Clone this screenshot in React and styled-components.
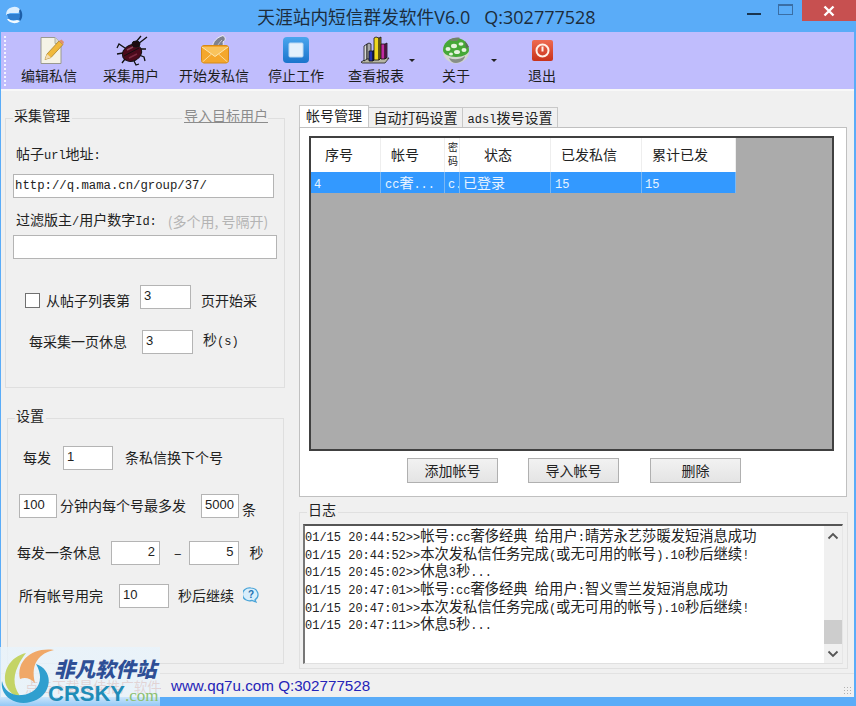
import styled, { createGlobalStyle } from "styled-components";

const CJK = `"Noto Sans CJK SC", "Noto Sans", sans-serif`;
const MONO = `"Liberation Mono", "Noto Sans CJK SC", monospace`;

const GlobalStyle = createGlobalStyle`
  html, body {
    margin: 0;
    padding: 0;
    overflow: hidden;
    background: #5aacf8;
  }
  * { box-sizing: border-box; }
`;

// latin runs are a half-width slab face in the original, cjk runs a bigger one
function Mixed({ children }) {
  const runs = children.match(/[\x00-\x7f]+|[^\x00-\x7f]+/g) || [];
  return runs.map((run, i) =>
    /^[\x00-\x7f]/.test(run) ? <Latin key={i}>{run}</Latin> : <span key={i}>{run}</span>
  );
}

function PencilIcon() {
  return (
    <svg width="32" height="30" viewBox="0 0 32 30">
      <path d="M8 2.500h14l6 6V28.500H8z" fill="#f5f3e6" stroke="#9a9a90" />
      <path d="M22 2.500v6h6" fill="#dcdccc" stroke="#b0b0a0" />
      <path d="M14 19l12-13 4 3.500-12 13-6 2z" fill="#f0b93c" stroke="#a8802a" strokeWidth=".8" />
      <path d="M26 6l4 3.500 1-2.500-2.500-2.500z" fill="#e09070" />
      <path d="M14 19l4 3.500-6 2z" fill="#f4dcae" />
    </svg>
  );
}

function BugIcon() {
  return (
    <svg width="32" height="30" viewBox="0 0 32 30" style={{ overflow: "visible" }}>
      <g stroke="#111" strokeWidth="1.300" fill="none">
        <path d="M21 7l5-6M23 9l9-7" />
        <path d="M10 13L4 9 2 13M8 18l-6 1M10 24l-3 4M19 26l2 4 3-1M24 20l5 2 1 4M25 14l6 0" />
      </g>
      <ellipse cx="17" cy="18" rx="10" ry="8" transform="rotate(-25 17 18)" fill="#4b0a1c" stroke="#111" />
      <ellipse cx="21" cy="9" rx="4" ry="3" fill="#1d0a10" stroke="#111" />
      <path d="M9 21L24 13" stroke="#111" />
      <path d="M12 15l6-3" stroke="#8a4658" strokeWidth="1.500" />
      <path d="M14 23l8-4" stroke="#7a2a40" strokeWidth="1.500" />
    </svg>
  );
}

function MailIcon() {
  return (
    <svg width="32" height="30" viewBox="0 0 32 30">
      <path d="M15 16C13 9 17 3 25 0.500c3 2 3 5 0 6.500 1 3-1 7-5 9.500z" fill="#7f828e" stroke="#f0f0f6" strokeWidth="1" />
      <path d="M18 15c1-4 3-7 6-10" stroke="#c4c6d0" fill="none" />
      <rect x="3.500" y="10.500" width="27" height="17.500" rx="2.500" fill="#f4a72c" stroke="#d58a18" />
      <path d="M4 12l13 9.500L30 12" fill="#f9c35c" stroke="#fbe6b0" />
      <path d="M4.500 27l9-8M29.500 27l-9-8" stroke="#fbdc98" />
    </svg>
  );
}

function StopIcon() {
  return (
    <svg width="32" height="30" viewBox="0 0 32 30">
      <defs>
        <linearGradient id="stopFill" x1="0" y1="0" x2="0" y2="1">
          <stop offset="0" stopColor="#4aa6ee" />
          <stop offset="1" stopColor="#1a74cc" />
        </linearGradient>
      </defs>
      <rect x="3" y="2" width="26" height="26" rx="4" fill="url(#stopFill)" />
      <rect x="9" y="8" width="14" height="14" rx="1" fill="#e4f1fc" stroke="#b8d8f4" />
    </svg>
  );
}

function ChartIcon() {
  return (
    <svg width="32" height="30" viewBox="0 0 32 30">
      <path d="M1 27l7-4h21l-4 5H2z" fill="#b6b6a4" stroke="#222" strokeWidth=".8" />
      <g stroke="#111" strokeWidth=".8">
        <path d="M4 11l3-2v15l-3 2z" fill="#d8d8d8" />
        <path d="M7 9l2-1 2 1v15H7z" fill="#a9a9a9" />
        <path d="M9 16h4v10H9z" fill="#2533b0" />
        <path d="M13 16l2-1v9l-2 2z" fill="#121a66" />
        <path d="M14 3l2-1 3 1v22h-5z" fill="#f0d820" />
        <path d="M19 3l2-1v21l-2 2z" fill="#99860c" />
        <path d="M21 9h4v15h-4z" fill="#c02aa0" />
        <path d="M25 9l2-1v14l-2 2z" fill="#701460" />
      </g>
    </svg>
  );
}

function GlobeIcon() {
  return (
    <svg width="32" height="30" viewBox="0 0 32 30">
      <ellipse cx="16" cy="16" rx="13" ry="12.500" fill="#d2d6d0" />
      <path d="M3 15C3 8 9 3 16 3s13 5 13 12c0 4-6 7-13 7S3 19 3 15z" fill="#46a838" />
      <g fill="#e6f4de">
        <ellipse cx="8" cy="14" rx="2.500" ry="2" />
        <ellipse cx="14" cy="11" rx="3" ry="2.200" />
        <ellipse cx="21" cy="9" rx="2.500" ry="1.800" />
        <ellipse cx="24" cy="15" rx="2.500" ry="2" />
        <ellipse cx="17" cy="17" rx="3" ry="2" />
        <ellipse cx="11" cy="19" rx="2" ry="1.500" />
      </g>
      <path d="M9 5c3-2 8-3 11-2l-3 3-5 0z" fill="#728368" />
      <path d="M9 23c5 2 11 2 16-2 0 3-4 7-9 7-3 0-6-2-7-5z" fill="#878f86" />
      <path d="M25 6l4 6-3 1z" fill="#5d6b5a" />
    </svg>
  );
}

function PowerIcon() {
  return (
    <svg width="32" height="30" viewBox="0 0 32 30">
      <defs>
        <linearGradient id="powerFill" x1="0" y1="0" x2="0" y2="1">
          <stop offset="0" stopColor="#ee6a50" />
          <stop offset="1" stopColor="#c8321a" />
        </linearGradient>
      </defs>
      <rect x="6" y="5" width="21" height="21" rx="2" fill="url(#powerFill)" />
      <circle cx="16.500" cy="15.500" r="6" fill="none" stroke="#fff1e8" strokeWidth="2" />
      <path d="M16.500 11.500v5" stroke="#fff1e8" strokeWidth="2" />
    </svg>
  );
}

function AppIcon() {
  return (
    <svg width="20" height="22" viewBox="0 0 20 22">
      <path d="M2 11a8 8 0 0 1 15-4l-3 2H6z" fill="#dcefff" />
      <path d="M3 10h13l-1 6H5z" fill="#2f7fd0" />
      <path d="M3 15c2 4 9 6 13 2l-3-1c-3 1-6 1-8-1z" fill="#f4fbff" />
      <path d="M16 5c3 3 3 9 0 12l-1-2c1-3 1-6 0-8z" fill="#1c5ea8" />
    </svg>
  );
}

function HelpIcon() {
  return (
    <svg width="16" height="16" viewBox="0 0 16 16">
      <path d="M8 1a7 6.500 0 0 1 4 11.800L13 15l-4-1.600A7 6.500 0 1 1 8 1z" fill="#d8eefb" stroke="#4aa4d8" strokeWidth="1.200" />
      <text x="8" y="11" textAnchor="middle" fontSize="10" fontWeight="700" fontFamily="Liberation Sans" fill="#2270b0">?</text>
    </svg>
  );
}

const tools = [
  { label: "编辑私信", w: 80, icon: <PencilIcon /> },
  { label: "采集用户", w: 84, icon: <BugIcon /> },
  { label: "开始发私信", w: 82, icon: <MailIcon /> },
  { label: "停止工作", w: 82, icon: <StopIcon /> },
  { label: "查看报表", w: 78, icon: <ChartIcon />, menu: true },
  { label: "关于", w: 82, icon: <GlobeIcon />, menu: true },
  { label: "退出", w: 90, icon: <PowerIcon /> },
];

const columns = [
  { title: "序号", w: 70, head: 14, cell: 3, value: "4" },
  { title: "帐号", w: 64, head: 10, cell: 4, value: "cc奢..." },
  { title: "密码", w: 15, head: 3, cell: 3, value: "c.", squeezed: true },
  { title: "状态", w: 91, head: 24, cell: 3, value: "已登录" },
  { title: "已发私信", w: 91, head: 10, cell: 4, value: "15" },
  { title: "累计已发", w: 94, head: 10, cell: 3, value: "15" },
];

const logLines = [
  "01/15 20:44:52>>帐号:cc奢侈经典 给用户:晴芳永艺莎暖发短消息成功",
  "01/15 20:44:52>>本次发私信任务完成(或无可用的帐号).10秒后继续!",
  "01/15 20:45:02>>休息3秒...",
  "01/15 20:47:01>>帐号:cc奢侈经典 给用户:智义雪兰发短消息成功",
  "01/15 20:47:01>>本次发私信任务完成(或无可用的帐号).10秒后继续!",
  "01/15 20:47:11>>休息5秒...",
];

export default function App() {
  return (
    <>
      <GlobalStyle />
      <Win>
        <TitleBar>
          <AppIconSlot>
            <AppIcon />
          </AppIconSlot>
          <TitleText>
            天涯站内短信群发软件<TitleLatin>V6.0&nbsp;&nbsp;&nbsp;Q:302777528</TitleLatin>
          </TitleText>
          <WinControls>
            <MinButton />
            <MaxButton />
            <CloseButton>
              <svg width="12" height="12" viewBox="0 0 12 12">
                <path d="M1.500 1.500l9 9M10.500 1.500l-9 9" stroke="#fff" strokeWidth="2.400" />
              </svg>
            </CloseButton>
          </WinControls>
        </TitleBar>

        <Body>
          <Toolbar>
            <Grip />
            {tools.map((tool) => (
              <ToolButton key={tool.label} $w={tool.w}>
                <ToolIcon>{tool.icon}</ToolIcon>
                <ToolLabel>{tool.label}</ToolLabel>
                {tool.menu && <MenuCaret />}
              </ToolButton>
            ))}
          </Toolbar>

          <Content>
            <LeftColumn>
              <Group $w={280} $h={270} $left={4} $top={29}>
                <GroupTitle $left={7}>采集管理</GroupTitle>
                <GroupLink>导入目标用户</GroupLink>
                <Row $h={20} $top={27} $left={10}>
                  <Text><Mixed>帖子url地址:</Mixed></Text>
                </Row>
                <Row $top={8} $left={7}>
                  <UrlInput $w={261} readOnly value="http://q.mama.cn/group/37/" />
                </Row>
                <Row $h={20} $top={14} $left={10}>
                  <Text><Mixed>过滤版主/用户数字Id:</Mixed></Text>
                  <Hint>(多个用, 号隔开)</Hint>
                </Row>
                <Row $top={3} $left={7}>
                  <Input $w={264} readOnly value="" />
                </Row>
                <Row $top={26} $left={19}>
                  <CheckBox />
                  <Text $ml={6} $drop={6}>从帖子列表第</Text>
                  <Input $ml={10} $w={51} readOnly value="3" />
                  <Text $ml={10} $drop={6}>页开始采</Text>
                </Row>
                <Row $top={21} $left={23}>
                  <Text>每采集一页休息</Text>
                  <Input $ml={15} $w={51} readOnly value="3" />
                  <Text $ml={10}><Mixed>秒(s)</Mixed></Text>
                </Row>
              </Group>

              <Group $w={277} $h={246} $left={6} $top={30}>
                <GroupTitle $left={7}>设置</GroupTitle>
                <Row $top={27} $left={15}>
                  <Text>每发</Text>
                  <Input $ml={12} $w={50} readOnly value="1" />
                  <Text $ml={12}>条私信换下个号</Text>
                </Row>
                <Row $top={24} $left={11}>
                  <Input $w={38} readOnly value="100" />
                  <Text $ml={3}>分钟内每个号最多发</Text>
                  <Input $ml={15} $w={38} readOnly value="5000" />
                  <Text $ml={3} $drop={6}>条</Text>
                </Row>
                <Row $top={23} $left={9}>
                  <Text>每发一条休息</Text>
                  <Input $ml={10} $w={49} $right readOnly value="2" />
                  <Text $ml={14}>–</Text>
                  <Input $ml={7} $w={50} $right readOnly value="5" />
                  <Text $ml={11}>秒</Text>
                </Row>
                <Row $top={19} $left={11}>
                  <Text>所有帐号用完</Text>
                  <Input $ml={16} $w={50} readOnly value="10" />
                  <Text $ml={9}>秒后继续</Text>
                  <HelpSlot>
                    <HelpIcon />
                  </HelpSlot>
                </Row>
              </Group>
            </LeftColumn>

            <RightColumn>
              <TabStrip>
                <Tab $w={70} $active>帐号管理</Tab>
                <Tab $w={94}>自动打码设置</Tab>
                <Tab $w={95}><Mixed>adsl拨号设置</Mixed></Tab>
              </TabStrip>
              <TabPane>
                <GridView>
                  <GridRow>
                    {columns.map((col) => (
                      <HeadCell key={col.title} $w={col.w} $pad={col.head} $squeezed={col.squeezed}>
                        {col.title}
                      </HeadCell>
                    ))}
                  </GridRow>
                  <GridRow>
                    {columns.map((col) => (
                      <BodyCell key={col.title} $w={col.w} $pad={col.cell}>
                        <Mixed>{col.value}</Mixed>
                      </BodyCell>
                    ))}
                  </GridRow>
                </GridView>
                <ButtonRow>
                  <PushButton>添加帐号</PushButton>
                  <PushButton>导入帐号</PushButton>
                  <PushButton>删除</PushButton>
                </ButtonRow>
              </TabPane>

              <LogGroup>
                <GroupTitle $left={7}>日志</GroupTitle>
                <LogBox>
                  <LogText>
                    {logLines.map((line, i) => (
                      <LogLine key={i}>
                        <Mixed>{line}</Mixed>
                      </LogLine>
                    ))}
                  </LogText>
                  <ScrollBar>
                    <ScrollArrow>
                      <svg width="12" height="8" viewBox="0 0 12 8">
                        <path d="M1.500 6.500L6 2l4.500 4.500" fill="none" stroke="#555" strokeWidth="1.800" />
                      </svg>
                    </ScrollArrow>
                    <ScrollTrack>
                      <ScrollThumb />
                    </ScrollTrack>
                    <ScrollArrow>
                      <svg width="12" height="8" viewBox="0 0 12 8">
                        <path d="M1.500 1.500L6 6l4.500-4.500" fill="none" stroke="#555" strokeWidth="1.800" />
                      </svg>
                    </ScrollArrow>
                  </ScrollBar>
                </LogBox>
              </LogGroup>
            </RightColumn>
          </Content>

          <StatusBar>
            <PromoText>点击下载最佳推广软件</PromoText>
            <SiteText>www.qq7u.com Q:302777528</SiteText>
            <ResizeGrip />
          </StatusBar>
        </Body>

        <Watermark>
          <svg width="60" height="59" viewBox="0 0 60 59">
            <path d="M20 32C16 14 32 0 54 3 40 6 30 16 35 36 30 31 25 30 20 32z" fill="#f0a868" />
            <path d="M26 6C10 10 2 24 6 38c3 8 10 12 16 13-8-8-10-20-4-32 2-5 5-9 8-13z" fill="#c4d466" />
            <path d="M36 17c12 4 16 16 10 27-6 11-24 16-36 8C3 47 1 40 2 34c2 10 10 15 20 14 14-1 24-14 14-31z" fill="#2f9fcf" />
          </svg>
          <WatermarkName>非凡软件站</WatermarkName>
          <WatermarkDomain>
            CRSKY<WatermarkCom>.com</WatermarkCom>
          </WatermarkDomain>
        </Watermark>
      </Win>
    </>
  );
}

const Latin = styled.span`
  font-family: ${MONO};
  font-size: 12px;
`;

const Win = styled.div`
  position: relative;
  width: 856px;
  height: 706px;
  overflow: hidden;
  display: flex;
  flex-direction: column;
  padding-bottom: 9px;
  background: #5aacf8;
  color: #222;
  font-family: ${CJK};
  font-size: 14px;
`;

const TitleBar = styled.div`
  flex: 0 0 32px;
  display: grid;
  grid-template-columns: 1fr auto 1fr;
  align-items: start;
`;

const AppIconSlot = styled.div`
  padding: 4px 0 0 4px;
`;

const TitleText = styled.div`
  margin: 3px 3px 0 0;
  font-size: 17.700px;
  line-height: 26px;
  color: #1c2c3c;
`;

const TitleLatin = styled.span`
  font-family: "Open Sans", "Noto Sans", sans-serif;
  font-size: 18px;
`;

const WinControls = styled.div`
  justify-self: end;
  display: flex;
  align-items: flex-start;
`;

const MinButton = styled.div`
  width: 14px;
  height: 2px;
  margin: 13px 17px 0 0;
  background: #1a3550;
`;

const MaxButton = styled.div`
  width: 15px;
  height: 11px;
  margin: 4px 9px 0 0;
  border: 1px solid #3a6ea5;
  border-top-width: 2px;
`;

const CloseButton = styled.div`
  width: 54px;
  height: 21px;
  display: flex;
  align-items: center;
  justify-content: center;
  background: #c75050;
`;

const Body = styled.div`
  flex: 1;
  min-height: 0;
  margin: 0 2px 0 1px;
  display: flex;
  flex-direction: column;
  background: #f0f0f0;
`;

const Toolbar = styled.div`
  flex: 0 0 57px;
  display: flex;
  align-items: flex-start;
  background: #c0bdfd;
`;

const Grip = styled.div`
  flex: 0 0 2px;
  height: 50px;
  margin: 4px 3px 0 3px;
  background: repeating-linear-gradient(#f4f4ff 0 2px, transparent 2px 4px);
`;

const ToolButton = styled.div`
  position: relative;
  flex: 0 0 ${(p) => p.$w}px;
  padding-top: 3px;
  display: flex;
  flex-direction: column;
  align-items: center;
`;

const ToolIcon = styled.div`
  width: 32px;
  height: 30px;
`;

const ToolLabel = styled.div`
  line-height: 20px;
  color: #1d1d1d;
  white-space: nowrap;
`;

const MenuCaret = styled.div`
  position: absolute;
  top: 27px;
  right: 0;
  border-left: 3px solid transparent;
  border-right: 3px solid transparent;
  border-top: 3px solid #222;
`;

const Content = styled.div`
  flex: 1;
  min-height: 0;
  display: flex;
  box-shadow: inset 0 2px 0 #f8f8f8;
`;

const LeftColumn = styled.div`
  flex: 0 0 298px;
`;

const Group = styled.div`
  position: relative;
  width: ${(p) => p.$w}px;
  height: ${(p) => p.$h}px;
  margin: ${(p) => p.$top}px 0 0 ${(p) => p.$left}px;
  border: 1px solid #dfdfdf;
`;

const GroupTitle = styled.div`
  position: absolute;
  top: -14px;
  left: ${(p) => p.$left}px;
  padding: 0 2px 0 1px;
  line-height: 20px;
  background: #f0f0f0;
`;

const GroupLink = styled.div`
  position: absolute;
  top: -14px;
  right: 16px;
  padding: 0 0 0 2px;
  line-height: 20px;
  color: #8c8c8c;
  text-decoration: underline;
  background: #f0f0f0;
`;

const Row = styled.div`
  display: flex;
  align-items: center;
  height: ${(p) => p.$h || 24}px;
  margin: ${(p) => p.$top}px 0 0 ${(p) => p.$left}px;
`;

const Text = styled.span`
  margin-left: ${(p) => p.$ml || 0}px;
  padding: ${(p) => (p.$drop ? `${p.$drop}px 0 0` : "0 0 3px")};
  line-height: 20px;
  white-space: nowrap;
`;

const Hint = styled.span`
  margin-left: 11px;
  padding-bottom: 3px;
  line-height: 20px;
  color: #b4b4b4;
  white-space: nowrap;
`;

const Input = styled.input`
  flex: 0 0 ${(p) => p.$w}px;
  width: ${(p) => p.$w}px;
  height: 24px;
  margin: 0 0 0 ${(p) => p.$ml || 0}px;
  padding: 0 4px 3px 3px;
  border: 1px solid #b4b4b4;
  border-radius: 0;
  outline: none;
  background: #fff;
  color: #222;
  font-family: "Liberation Sans", sans-serif;
  font-size: 13px;
  text-align: ${(p) => (p.$right ? "right" : "left")};
`;

const UrlInput = styled(Input)`
  padding-bottom: 0;
  padding-left: 1px;
  font-family: ${MONO};
  font-size: 12.300px;
`;

const CheckBox = styled.span`
  flex: 0 0 15px;
  height: 15px;
  margin-top: 7px;
  border: 1px solid #707070;
  background: #fff;
`;

const HelpSlot = styled.span`
  display: flex;
  margin-left: 9px;
  padding-bottom: 3px;
`;

const RightColumn = styled.div`
  flex: 1;
  min-width: 0;
  padding: 16px 6px 0 0;
`;

const TabStrip = styled.div`
  display: flex;
  align-items: flex-end;
  height: 22px;
`;

const Tab = styled.div`
  width: ${(p) => p.$w}px;
  height: ${(p) => (p.$active ? 22 : 20)}px;
  border: 1px solid #c8c8c8;
  border-bottom: none;
  border-left-width: ${(p) => (p.$active ? 1 : 0)}px;
  background: ${(p) => (p.$active ? "#fff" : "#f0f0f0")};
  line-height: 19px;
  text-align: center;
  white-space: nowrap;
`;

const TabPane = styled.div`
  width: 548px;
  height: 370px;
  padding: 8px 0 0 9px;
  border: 1px solid #c0c0c0;
  background: #fff;
`;

const GridView = styled.div`
  width: 525px;
  height: 315px;
  border: 2px solid #404040;
  background: #ababab;
`;

const GridRow = styled.div`
  display: flex;
  width: 425px;
`;

const HeadCell = styled.div`
  flex: 0 0 ${(p) => p.$w}px;
  height: 34px;
  padding: ${(p) => (p.$squeezed ? "2px 0 0 3px" : `0 0 2px ${p.$pad}px`)};
  overflow: hidden;
  border-right: 1px solid #eeeeee;
  background: #fff;
  font-size: ${(p) => (p.$squeezed ? "10px" : "14px")};
  line-height: ${(p) => (p.$squeezed ? "14px" : "32px")};
`;

const BodyCell = styled.div`
  flex: 0 0 ${(p) => p.$w}px;
  height: 21px;
  padding-left: ${(p) => p.$pad}px;
  overflow: hidden;
  border-right: 1px solid #7ab8f5;
  background: #3399ff;
  color: #e9f4ff;
  line-height: 21px;
  white-space: nowrap;
`;

const ButtonRow = styled.div`
  display: flex;
  gap: 30px;
  margin: 7px 0 0 98px;
`;

const PushButton = styled.div`
  flex: 0 0 91px;
  height: 25px;
  border: 1px solid #b0b0b0;
  background: linear-gradient(#f2f2f2, #e4e4e4);
  line-height: 22px;
  text-align: center;

  &:last-child {
    margin-left: 1px;
  }
`;

const LogGroup = styled.div`
  position: relative;
  width: 549px;
  height: 157px;
  margin-top: 15px;
  padding: 11px 4px 0 3px;
  border: 1px solid #e0e0e0;
`;

const LogBox = styled.div`
  display: flex;
  height: 140px;
  border-top: 2px solid #555;
  border-left: 2px solid #777;
  border-right: 1px solid #e6e6e6;
  border-bottom: 1px solid #e0e0e0;
  background: #fff;
`;

const LogText = styled.div`
  flex: 1;
  min-width: 0;
  font-size: 14.300px;
`;

const LogLine = styled.div`
  height: 17.700px;
  line-height: 17.700px;
  white-space: nowrap;
`;

const ScrollBar = styled.div`
  flex: 0 0 18px;
  display: flex;
  flex-direction: column;
  background: #f0f0f0;
`;

const ScrollArrow = styled.div`
  flex: 0 0 19px;
  display: flex;
  align-items: center;
  justify-content: center;
`;

const ScrollTrack = styled.div`
  flex: 1;
  display: flex;
  flex-direction: column;
  justify-content: flex-end;
`;

const ScrollThumb = styled.div`
  height: 24px;
  background: #cdcdcd;
`;

const StatusBar = styled.div`
  position: relative;
  flex: 0 0 24px;
  display: flex;
  align-items: center;
  padding-left: 24px;
  border-top: 1px solid #e2e2e2;
  background: #f0f0f0;
`;

const PromoText = styled.span`
  font-size: 13.600px;
  color: #c8553a;
  white-space: nowrap;
`;

const SiteText = styled.span`
  margin-left: 10px;
  color: #2424b8;
  font-family: "Liberation Sans", sans-serif;
  font-size: 15.200px;
  white-space: nowrap;
`;

const ResizeGrip = styled.div`
  position: absolute;
  right: 1px;
  bottom: 1px;
  width: 10px;
  height: 10px;
  background: radial-gradient(circle, #b0b0b0 1px, transparent 1px) 0 0 / 3px 3px;
`;

const Watermark = styled.div`
  position: absolute;
  left: 0;
  top: 647px;
  width: 160px;
  height: 59px;
  background: linear-gradient(rgba(232, 243, 251, 0.8) 85%, rgba(170, 212, 245, 0.7));
`;

const WatermarkName = styled.div`
  position: absolute;
  left: 54px;
  top: 8px;
  font-size: 20.500px;
  font-weight: 900;
  font-style: italic;
  line-height: 26px;
  color: #2e4f96;
  white-space: nowrap;
`;

const WatermarkDomain = styled.div`
  position: absolute;
  left: 48px;
  top: 36px;
  font-family: "Liberation Sans", sans-serif;
  font-size: 22px;
  font-weight: 700;
  line-height: 22px;
  color: #1f8db8;
  white-space: nowrap;
`;

const WatermarkCom = styled.span`
  font-family: "Liberation Serif", serif;
  font-size: 17px;
  font-weight: 400;
  color: #8cc070;
`;
